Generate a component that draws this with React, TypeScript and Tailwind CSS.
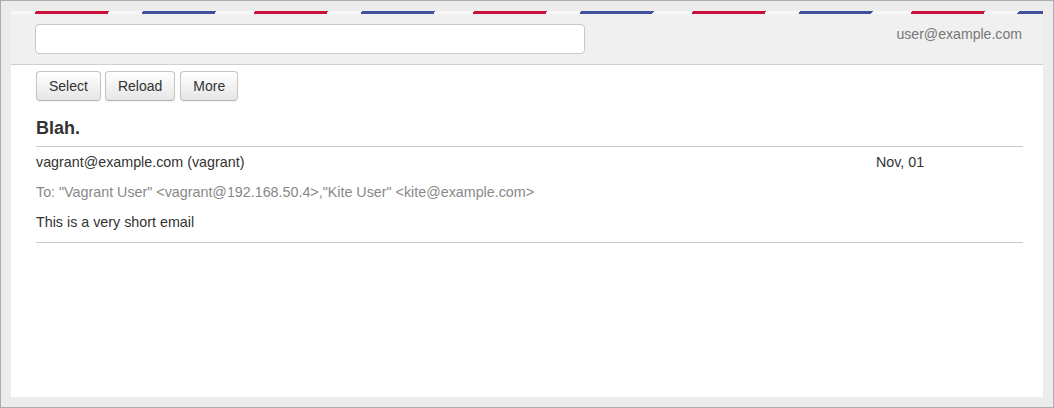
import React from "react";

const btn =
  "h-[30px] px-[12px] rounded-[4px] border border-[#c5c5c5] border-b-[#b3b3b3] bg-gradient-to-b from-white to-[#e6e6e6] text-[14px] text-[#333] shadow-[inset_0_1px_0_rgba(255,255,255,0.2),0_1px_2px_rgba(0,0,0,0.05)]";

export default function App() {
  return (
    <div className="w-[1054px] h-[408px] border border-[#adadad] bg-[#ececec] p-[10px] font-['Liberation_Sans',Arial,sans-serif]">
      <div className="h-full flex flex-col bg-white">
        <header className="bg-[#f0f0f0] border-b border-[#cfcfcf]">
          {/* airmail stripes */}
          <div className="h-[3px] bg-[image:repeating-linear-gradient(120deg,#f7f7f7_0px,#f7f7f7_21.65px,#c8103a_21.65px,#c8103a_84.87px,#f7f7f7_84.87px,#f7f7f7_114.3px,#3f519e_114.3px,#3f519e_177.5px,#f7f7f7_177.5px,#f7f7f7_189.65px)]" />
          <div className="flex items-center justify-between pl-[24px] pr-[21px] py-[10px]">
            <input
              type="text"
              className="w-[550px] h-[30px] bg-white border border-[#c8c8c8] rounded-[4px] px-2 text-[14px] outline-none"
            />
            <span className="text-[14.1px] text-[#777] -mt-[8px]">user@example.com</span>
          </div>
        </header>

        <main className="pl-[25px] pr-[20px] pt-[6px]">
          <div className="flex gap-[4px]">
            <button className={btn}>Select</button>
            <button className={btn}>Reload</button>
            <button className={`${btn} ml-px`}>More</button>
          </div>

          <h4 className="mt-[17px] text-[18px] leading-[20px] font-bold text-[#333]">Blah.</h4>

          <div className="mt-[8px] border-t border-b border-[#c8c8c8] pt-[5px] pb-[10px] text-[14.3px] leading-[20px] text-[#333]">
            <div className="flex">
              <span className="flex-1">vagrant@example.com (vagrant)</span>
              <span className="w-[147px]">Nov, 01</span>
            </div>
            <div className="mt-[10px] text-[#888]">
              To: "Vagrant User" &lt;vagrant@192.168.50.4&gt;,"Kite User" &lt;kite@example.com&gt;
            </div>
            <div className="mt-[10px]">This is a very short email</div>
          </div>
        </main>
      </div>
    </div>
  );
}
